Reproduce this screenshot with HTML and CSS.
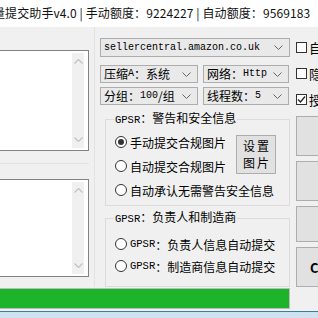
FILE: index.html
```html
<!DOCTYPE html>
<html lang="zh-CN">
<head>
  <meta charset="UTF-8" />
  <title>提交助手v4.0</title>
  <link rel="stylesheet" href="styles.css">
</head>
<body>

  <div class="titlebar">
    <span class="title">量提交助手v4.0 | 手动额度：9224227 | 自动额度：9569183</span>
  </div>

  <div class="main">
    <div class="left">
      <div class="textbox">
        <div class="scrollbar">
          <svg width="9" height="5" viewBox="0 0 9 5"><polyline points="0.5,4.5 4.5,0.5 8.5,4.5" fill="none" stroke="#c2c2c2" stroke-width="1.2"/></svg>
          <svg width="9" height="5" viewBox="0 0 9 5"><polyline points="0.5,0.5 4.5,4.5 8.5,0.5" fill="none" stroke="#c2c2c2" stroke-width="1.2"/></svg>
        </div>
      </div>
      <div class="splitter"></div>
      <div class="textbox second">
        <div class="scrollbar">
          <svg width="9" height="5" viewBox="0 0 9 5"><polyline points="0.5,4.5 4.5,0.5 8.5,4.5" fill="none" stroke="#c2c2c2" stroke-width="1.2"/></svg>
          <svg width="9" height="5" viewBox="0 0 9 5"><polyline points="0.5,0.5 4.5,4.5 8.5,0.5" fill="none" stroke="#c2c2c2" stroke-width="1.2"/></svg>
        </div>
      </div>
    </div>

    <div class="middle">
      <div class="combo wide">
        <span class="en">sellercentral.amazon.co.uk</span>
        <svg class="arrow" width="9" height="5" viewBox="0 0 9 5"><polyline points="0.5,0.5 4.5,4.5 8.5,0.5" fill="none" stroke="#666" stroke-width="1"/></svg>
      </div>
      <div class="combo-row">
        <div class="combo">压缩<span class="en">A</span>：系统
          <svg class="arrow" width="9" height="5" viewBox="0 0 9 5"><polyline points="0.5,0.5 4.5,4.5 8.5,0.5" fill="none" stroke="#666" stroke-width="1"/></svg>
        </div>
        <div class="combo">网络：<span class="en">Http</span>
          <svg class="arrow" width="9" height="5" viewBox="0 0 9 5"><polyline points="0.5,0.5 4.5,4.5 8.5,0.5" fill="none" stroke="#666" stroke-width="1"/></svg>
        </div>
      </div>
      <div class="combo-row">
        <div class="combo">分组：<span class="en">100</span>/组
          <svg class="arrow" width="9" height="5" viewBox="0 0 9 5"><polyline points="0.5,0.5 4.5,4.5 8.5,0.5" fill="none" stroke="#666" stroke-width="1"/></svg>
        </div>
        <div class="combo">线程数：<span class="en">5</span>
          <svg class="arrow" width="9" height="5" viewBox="0 0 9 5"><polyline points="0.5,0.5 4.5,4.5 8.5,0.5" fill="none" stroke="#666" stroke-width="1"/></svg>
        </div>
      </div>

      <fieldset class="group warn">
        <legend><span class="en">GPSR</span>：警告和安全信息</legend>
        <div class="warn-body">
          <label class="radio on"><span class="circle"></span>手动提交合规图片</label>
          <button class="set-btn"><span>设置</span><span>图片</span></button>
          <label class="radio"><span class="circle"></span>自动提交合规图片</label>
          <label class="radio full"><span class="circle"></span>自动承认无需警告安全信息</label>
        </div>
      </fieldset>

      <fieldset class="group maker">
        <legend><span class="en">GPSR</span>：负责人和制造商</legend>
        <label class="radio"><span class="circle"></span><span class="en">GPSR</span>：负责人信息自动提交</label>
        <label class="radio"><span class="circle"></span><span class="en">GPSR</span>：制造商信息自动提交</label>
      </fieldset>
    </div>

    <div class="right">
      <label class="check"><span class="box"></span>自动登录</label>
      <label class="check"><span class="box"></span>隐藏窗口</label>
      <label class="check"><span class="box on">
        <svg width="11" height="11" viewBox="0 0 11 11"><polyline points="2,5.5 4.5,8 9,2.5" fill="none" stroke="#222" stroke-width="1.3"/></svg>
      </span>授权</label>
      <div class="side-buttons">
        <button class="side-btn">开始</button>
        <button class="side-btn">暂停</button>
        <button class="side-btn short">停止</button>
        <button class="side-btn last">C</button>
      </div>
    </div>
  </div>

  <div class="progress"><div class="fill" style="width: 289px;"></div></div>
  <div class="statusbar"></div>

</body>
</html>
```

FILE: styles.css
```css
html, body {
  margin: 0;
}

body {
  width: 318px;
  height: 318px;
  overflow: hidden;
  background-color: #f0f0f0;
  color: #000;
  font-family: "Noto Sans CJK SC", sans-serif;
  font-size: 12px;
}

.en {
  font-family: "Liberation Mono", monospace;
  font-size: 10.5px;
}

.titlebar {
  height: 27px;
  background-color: #fff;
  white-space: nowrap;
  overflow: hidden;
  line-height: 26px;
}

.title {
  display: block;
  margin-left: -7px;
  color: #111;
  letter-spacing: 0.1px;
}

.main {
  display: flex;
  height: 260px;
}

/* left text areas */
.left {
  width: 99px;
  flex-shrink: 0;
  margin-left: -10px;
  padding: 23px 5px 0 0;
  border-right: 1px solid #e2e2e2;
}

.textbox {
  height: 99px;
  border: 1px solid #828282;
  background-color: #fff;
  display: flex;
  justify-content: flex-end;
}

.splitter {
  height: 0;
  margin: 12px 0 15px;
  border-top: 1px solid #e2e2e2;
}

.textbox.second {
  height: 96px;
}

.scrollbar {
  width: 12px;
  margin: 2px 4px 2px 0;
  background-color: #f0f0f0;
  display: flex;
  flex-direction: column;
  justify-content: space-between;
  align-items: center;
  padding: 6px 0;
}

/* combos */
.middle {
  width: 190px;
  flex-shrink: 0;
  margin-left: 5px;
  padding-top: 11px;
}

.combo {
  height: 16px;
  border: 1px solid #adadad;
  background-color: #e9e9e9;
  display: flex;
  align-items: center;
  padding-left: 3px;
  line-height: 16px;
  white-space: nowrap;
}

.combo.wide {
  height: 17px;
  margin-bottom: 8px;
}

.combo .en {
  font-size: 10px;
}

.arrow {
  margin-left: auto;
  margin-right: 6px;
  flex-shrink: 0;
}

.combo-row {
  display: grid;
  grid-template-columns: 98px 86px;
  gap: 5px;
  margin-bottom: 4px;
}

/* group boxes */
.group {
  margin: 0 0 0 5px;
  padding: 0 0 0 9px;
  border: 1px solid #dcdcdc;
}

.group legend {
  padding: 0 1px;
  margin-left: -1px;
  line-height: 16px;
}

.warn {
  margin-top: 5px;
  padding-bottom: 3px;
}

.warn-body {
  padding-top: 2px;
  display: grid;
  grid-template-columns: 121px 40px;
  grid-template-rows: 24px 24px 24px;
}

.maker {
  margin-top: 3px;
  padding-top: 6px;
  padding-bottom: 9px;
}

.radio {
  display: flex;
  align-items: center;
  white-space: nowrap;
}

.maker .radio {
  height: 22px;
}

.radio.full {
  grid-column: 1 / 3;
}

.circle {
  width: 12px;
  height: 12px;
  border: 1px solid #333;
  border-radius: 50%;
  background-color: #fff;
  margin-right: 3px;
  box-sizing: border-box;
  display: flex;
  align-items: center;
  justify-content: center;
  flex-shrink: 0;
}

.radio.on .circle::after {
  content: "";
  width: 6px;
  height: 6px;
  border-radius: 50%;
  background-color: #333;
}

.set-btn {
  grid-column: 2;
  grid-row: 1 / 3;
  align-self: center;
  height: 39px;
  padding: 0;
  border: 1px solid #adadad;
  background-color: #e1e1e1;
  font-family: inherit;
  font-size: 12px;
  letter-spacing: 2px;
  line-height: 17px;
  display: flex;
  flex-direction: column;
  align-items: center;
  justify-content: center;
}

.set-btn span {
  margin-right: -2px;
}

/* right column */
.right {
  margin-left: 6px;
  padding-top: 14px;
  flex: 1;
  min-width: 0;
}

.check {
  display: flex;
  align-items: center;
  height: 13px;
  margin-bottom: 13px;
  white-space: nowrap;
  font-size: 13px;
}

.box {
  width: 11px;
  height: 11px;
  border: 1px solid #333;
  background-color: #fff;
  margin-right: 2px;
  box-sizing: border-box;
  display: flex;
  align-items: center;
  justify-content: center;
  flex-shrink: 0;
}

.box svg {
  flex-shrink: 0;
}

.side-buttons {
  margin-top: -3px;
  display: flex;
  flex-direction: column;
  gap: 5px;
}

.side-btn {
  width: 90px;
  height: 40px;
  flex-shrink: 0;
  border: 1px solid #adadad;
  background-color: #e1e1e1;
  font-family: inherit;
  font-size: 13px;
  color: #000;
}

.side-btn.short {
  height: 36px;
}

.side-btn.last {
  text-align: left;
  padding-left: 13px;
  font-weight: bold;
}

/* bottom */
.progress {
  margin-top: 1px;
  width: 290px;
  height: 21px;
  border: 1px solid #bcbcbc;
  border-left: none;
  background-color: #e6e6e6;
  box-sizing: border-box;
}

.fill {
  height: 19px;
  background-color: #1db32b;
}

.statusbar {
  margin-top: 2px;
  height: 8px;
  background-color: #cfe2ef;
  border-top: 1px solid #3b7f98;
}
```
